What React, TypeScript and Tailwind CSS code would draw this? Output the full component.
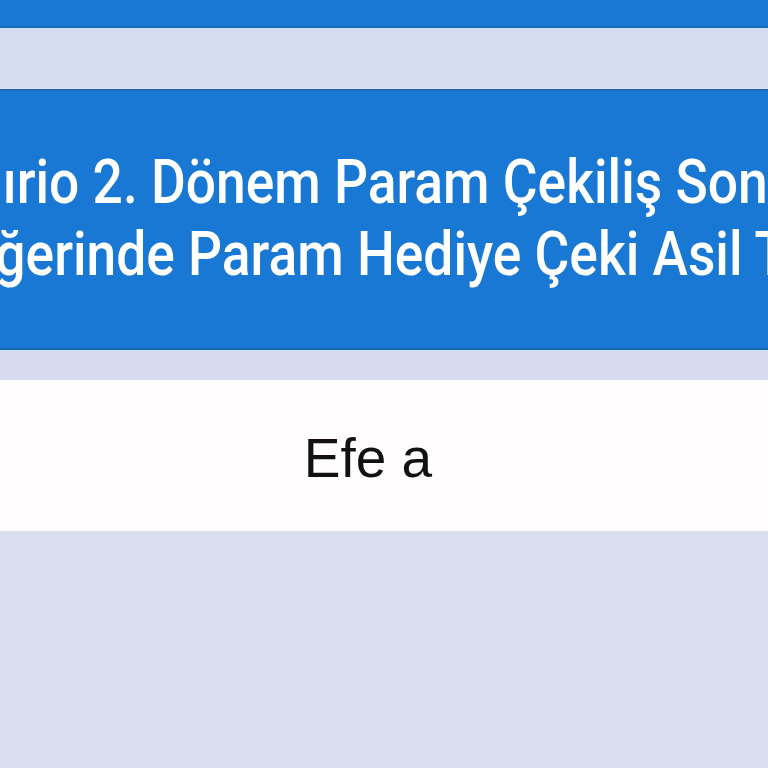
export default function App() {
  return (
    <div className="min-h-[768px] w-full overflow-hidden bg-[#d8ddf0]" style={{ fontFamily: 'Roboto, "Liberation Sans", sans-serif' }}>
      {/* Top nav bar */}
      <div className="h-[28px] bg-[#1878d3] border-b-2 border-[#1f68b0]" />

      {/* Light band */}
      <div className="h-[61px] border-t border-[#bfe0fb] bg-[#d6ddf1]" />

      {/* Title banner */}
      <section className="h-[261px] bg-[#1878d3] border-y-2 border-t-[#1f68b0] border-b-[#1f68b0] flex flex-col items-center justify-center overflow-hidden">
        <div className="flex flex-col items-center text-white font-medium text-[62px] leading-[72px] pb-[4px]">
          <div className="whitespace-nowrap scale-x-[0.86] pl-[30px]">Kazandırio 2. Dönem Param Çekiliş Sonuçlarıyla</div>
          <div className="whitespace-nowrap scale-x-[0.86] pr-[50px]">100 TL Değerinde Param Hediye Çeki Asil Talihlileri</div>
        </div>
      </section>

      {/* Gap */}
      <div className="h-[30px] bg-[#d8dbef] border-t border-[#c6e2fb]" />

      {/* Winner row */}
      <div className="h-[153px] bg-[#fffdfe] border-b-2 border-[#dcdcea] flex items-center justify-center pr-[32px]">
        <span className="text-[55px] text-[#111] pt-[6px]" style={{ fontFamily: '"Liberation Sans", Arial, sans-serif' }}>
          Efe a
        </span>
      </div>
    </div>
  );
}
